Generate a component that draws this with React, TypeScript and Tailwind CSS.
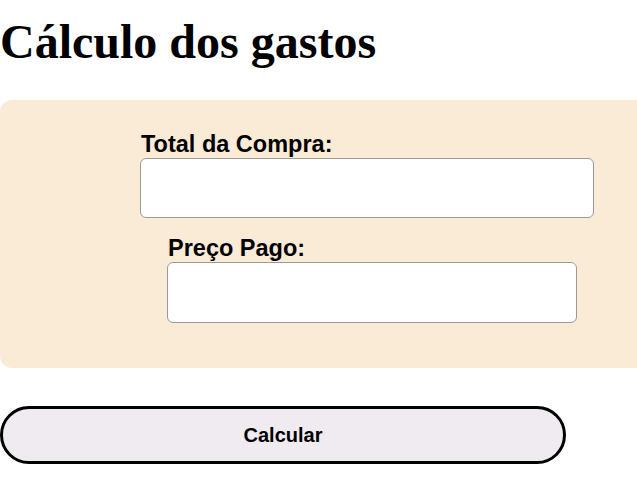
export default function App() {
  return (
    <div className="min-h-screen bg-white text-black">
      <h1 className="pt-[15px] pb-[32px] text-[48px] font-bold leading-[53px] font-['Liberation_Serif',serif]">
        Cálculo dos gastos
      </h1>

      <form
        className="rounded-l-[12px] bg-[#faebd7] pt-[31px] pb-[45px] font-['Liberation_Sans',Arial,sans-serif]"
        onSubmit={(e) => e.preventDefault()}
      >
        <div className="flex flex-col pl-[140px]">
          <label htmlFor="total" className="pl-px text-[23.5px] font-bold leading-[27px]">
            Total da Compra:
          </label>
          <input
            id="total"
            type="text"
            className="h-[60px] w-[454px] rounded-[6px] border border-[#9a9a9a] bg-white px-2"
          />
        </div>

        <div className="mt-[17px] flex flex-col pl-[167px]">
          <label htmlFor="pago" className="pl-px text-[23.5px] font-bold leading-[27px]">
            Preço Pago:
          </label>
          <input
            id="pago"
            type="text"
            className="h-[61px] w-[410px] rounded-[6px] border border-[#9a9a9a] bg-white px-2"
          />
        </div>
      </form>

      <button
        type="button"
        className="mt-[38px] h-[58px] w-[566px] rounded-full border-[3px] border-black bg-[#f0ebf0] text-[20px] font-bold font-['Liberation_Sans',Arial,sans-serif]"
      >
        Calcular
      </button>
    </div>
  );
}
